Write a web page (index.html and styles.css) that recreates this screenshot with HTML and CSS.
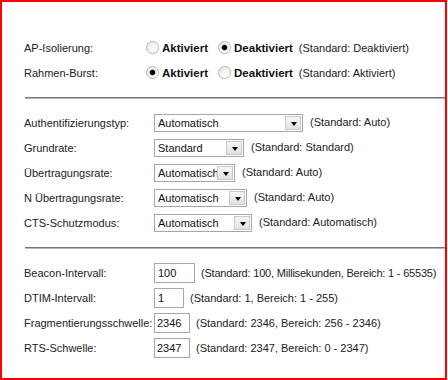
FILE: index.html
```html
<!DOCTYPE html>
<html lang="de">

<head>
  <meta charset="UTF-8">
  <title>Erweiterte Wireless-Einstellungen</title>
  <link rel="stylesheet" href="styles.css">
</head>

<body>
  <div class="frame">
    <div class="row">
      <span class="label short">AP-Isolierung:</span>
      <label class="choice"><input type="radio" name="isolation">Aktiviert</label>
      <label class="choice"><input type="radio" name="isolation" checked>Deaktiviert</label>
      <span class="hint">(Standard: Deaktiviert)</span>
    </div>
    <div class="row">
      <span class="label short">Rahmen-Burst:</span>
      <label class="choice"><input type="radio" name="burst" checked>Aktiviert</label>
      <label class="choice"><input type="radio" name="burst">Deaktiviert</label>
      <span class="hint">(Standard: Aktiviert)</span>
    </div>

    <div class="divider"></div>

    <div class="row">
      <span class="label">Authentifizierungstyp:</span>
      <span class="dropdown auth">
        <select>
          <option>Automatisch</option>
          <option>Gemeinsamer Schlüssel</option>
        </select>
      </span>
      <span class="hint raised">(Standard: Auto)</span>
    </div>
    <div class="row">
      <span class="label">Grundrate:</span>
      <span class="dropdown basic">
        <select>
          <option>Standard</option>
          <option>1-2 Mbit/s</option>
          <option>Alle</option>
        </select>
      </span>
      <span class="hint raised">(Standard: Standard)</span>
    </div>
    <div class="row">
      <span class="label">Übertragungsrate:</span>
      <span class="dropdown rate">
        <select>
          <option>Automatisch</option>
        </select>
      </span>
      <span class="hint raised">(Standard: Auto)</span>
    </div>
    <div class="row">
      <span class="label">N Übertragungsrate:</span>
      <span class="dropdown nrate">
        <select>
          <option>Automatisch</option>
        </select>
      </span>
      <span class="hint raised">(Standard: Auto)</span>
    </div>
    <div class="row">
      <span class="label">CTS-Schutzmodus:</span>
      <span class="dropdown cts">
        <select>
          <option>Automatisch</option>
          <option>Deaktiviert</option>
        </select>
      </span>
      <span class="hint raised">(Standard: Automatisch)</span>
    </div>

    <div class="divider"></div>

    <div class="row">
      <span class="label">Beacon-Intervall:</span>
      <input type="text" class="field beacon" value="100">
      <span class="hint long">(Standard: 100, Millisekunden, Bereich: 1 - 65535)</span>
    </div>
    <div class="row">
      <span class="label">DTIM-Intervall:</span>
      <input type="text" class="field dtim" value="1">
      <span class="hint">(Standard: 1, Bereich: 1 - 255)</span>
    </div>
    <div class="row">
      <span class="label">Fragmentierungsschwelle:</span>
      <input type="text" class="field threshold" value="2346">
      <span class="hint">(Standard: 2346, Bereich: 256 - 2346)</span>
    </div>
    <div class="row">
      <span class="label">RTS-Schwelle:</span>
      <input type="text" class="field threshold" value="2347">
      <span class="hint">(Standard: 2347, Bereich: 0 - 2347)</span>
    </div>
  </div>
</body>

</html>
```

FILE: styles.css
```css
body {
  margin: 0;
  background-color: #fff;
  font-family: 'Liberation Sans', Arial, sans-serif;
  font-size: 11px;
  color: #222;
}

.frame {
  box-sizing: border-box;
  width: 447px;
  height: 380px;
  border: 2px solid #f00;
  padding: 33px 0 0 22px;
  overflow: hidden;
}

.row {
  display: flex;
  align-items: center;
  height: 25px;
  white-space: nowrap;
}

.label {
  width: 130px;
  flex: none;
}

.label.short {
  width: 122px;
}

/* radio buttons */
.choice {
  display: flex;
  align-items: center;
  font-weight: bold;
  font-size: 11.5px;
  color: #111;
  margin-right: 10px;
}

.choice input {
  appearance: none;
  -webkit-appearance: none;
  box-sizing: border-box;
  width: 13px;
  height: 13px;
  margin: 0 3px 0 0;
  border: 1px solid #b4b4b4;
  border-radius: 50%;
  background: linear-gradient(135deg, #e2e2e2, #fff 70%);
}

.choice input:checked {
  background: radial-gradient(circle, #000 0 2.2px, #777 2.6px, transparent 3.4px),
    linear-gradient(135deg, #e2e2e2, #fff 70%);
}

.choice + .choice {
  margin-right: 6px;
}

.hint {
  color: #222;
}

.hint.raised {
  position: relative;
  top: -1px;
}

.hint.long {
  letter-spacing: -0.2px;
}

/* dropdowns */
.dropdown {
  position: relative;
  display: block;
  flex: none;
  height: 18px;
  margin-right: 7px;
}

.dropdown select {
  appearance: none;
  -webkit-appearance: none;
  box-sizing: border-box;
  width: 100%;
  height: 18px;
  margin: 0;
  padding: 0 0 0 3px;
  border: 1px solid #a7a7a7;
  border-radius: 0;
  background-color: #fff;
  font-family: inherit;
  font-size: 11px;
  color: #111;
  outline: none;
}

.dropdown::after {
  content: '';
  position: absolute;
  top: 2px;
  right: 2px;
  width: 14px;
  height: 12px;
  border: 1px solid #c9c9c9;
  background: linear-gradient(#f6f6f6, #e2e2e2);
  pointer-events: none;
}

.dropdown::before {
  content: '';
  position: absolute;
  z-index: 1;
  top: 8px;
  right: 6px;
  border-left: 3.5px solid transparent;
  border-right: 3.5px solid transparent;
  border-top: 4px solid #000;
  pointer-events: none;
}

.dropdown.auth {
  width: 149px;
}

.dropdown.basic {
  width: 90px;
}

.dropdown.rate {
  width: 81px;
}

.dropdown.nrate {
  width: 93px;
}

.dropdown.cts {
  width: 98px;
}

/* text fields */
.field {
  box-sizing: border-box;
  height: 20px;
  margin: 0 6px 0 0;
  padding: 0 0 0 3px;
  border: 1px solid #a7a7a7;
  font-family: inherit;
  font-size: 11px;
  color: #111;
  outline: none;
}

.field.beacon {
  width: 41px;
}

.field.dtim {
  width: 30px;
}

.field.threshold {
  width: 36px;
  padding-left: 2px;
}

.divider {
  display: flex;
  align-items: center;
  height: 25px;
  margin-left: 1px;
  width: 420px;
}

.divider::before {
  content: '';
  flex: 1;
  border-top: 1px solid #777;
  border-bottom: 1px solid #b5b5b5;
}
```
